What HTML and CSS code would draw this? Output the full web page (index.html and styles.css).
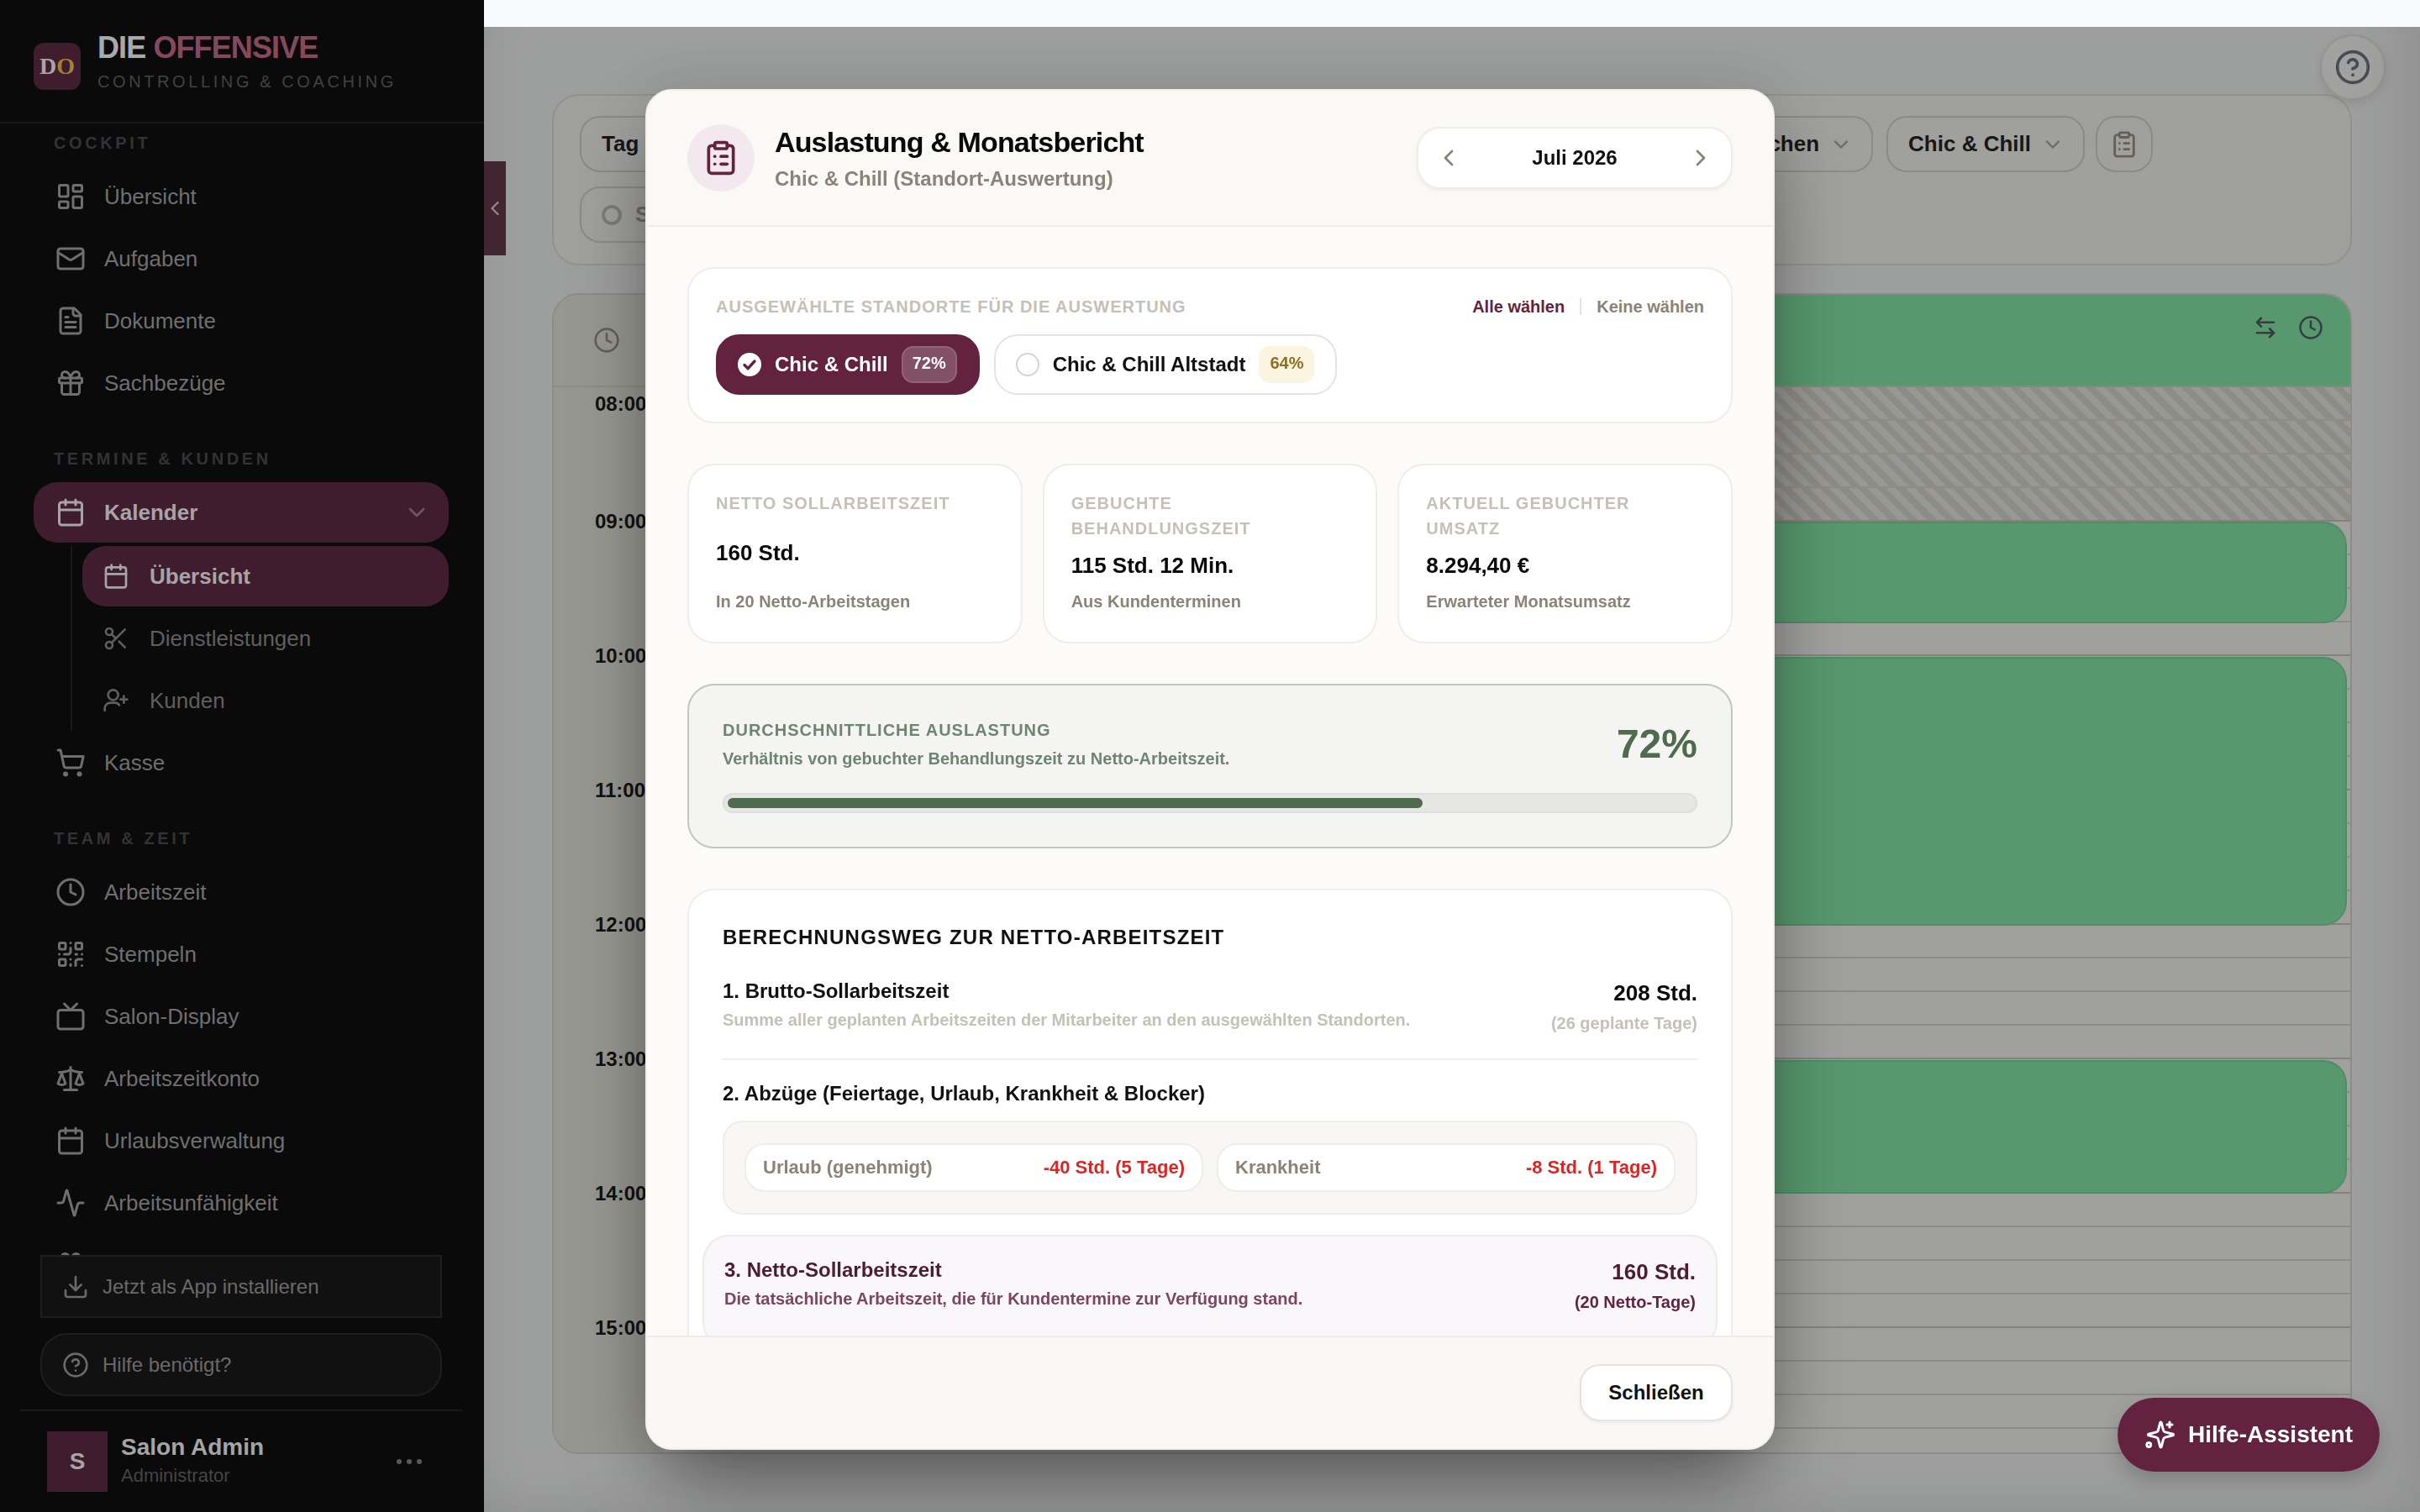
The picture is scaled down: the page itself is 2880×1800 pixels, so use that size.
FILE: index.html
```html
<!DOCTYPE html>
<html lang="de">
<head>
    <meta charset="UTF-8">
    <title>Auslastung &amp; Monatsbericht</title>
    <link rel="stylesheet" href="styles.css">
</head>
<body>
    <svg class="sprite" xmlns="http://www.w3.org/2000/svg">
        <symbol id="i-dash" viewBox="0 0 24 24"><rect x="3" y="3" width="7" height="9" rx="1"/><rect x="14" y="3" width="7" height="5" rx="1"/><rect x="14" y="12" width="7" height="9" rx="1"/><rect x="3" y="16" width="7" height="5" rx="1"/></symbol>
        <symbol id="i-mail" viewBox="0 0 24 24"><rect x="2" y="4" width="20" height="16" rx="2"/><path d="m22 7-8.97 5.7a1.94 1.94 0 0 1-2.06 0L2 7"/></symbol>
        <symbol id="i-file" viewBox="0 0 24 24"><path d="M15 2H6a2 2 0 0 0-2 2v16a2 2 0 0 0 2 2h12a2 2 0 0 0 2-2V7Z"/><path d="M14 2v4a2 2 0 0 0 2 2h4"/><path d="M10 9H8"/><path d="M16 13H8"/><path d="M16 17H8"/></symbol>
        <symbol id="i-gift" viewBox="0 0 24 24"><rect x="3" y="8" width="18" height="4" rx="1"/><path d="M12 8v13"/><path d="M19 12v7a2 2 0 0 1-2 2H7a2 2 0 0 1-2-2v-7"/><path d="M7.5 8a2.5 2.5 0 0 1 0-5A4.8 8 0 0 1 12 8a4.8 8 0 0 1 4.5-5 2.5 2.5 0 0 1 0 5"/></symbol>
        <symbol id="i-cal" viewBox="0 0 24 24"><path d="M8 2v4"/><path d="M16 2v4"/><rect x="3" y="4" width="18" height="18" rx="2"/><path d="M3 10h18"/></symbol>
        <symbol id="i-down" viewBox="0 0 24 24"><path d="m6 9 6 6 6-6"/></symbol>
        <symbol id="i-left" viewBox="0 0 24 24"><path d="m15 18-6-6 6-6"/></symbol>
        <symbol id="i-right" viewBox="0 0 24 24"><path d="m9 18 6-6-6-6"/></symbol>
        <symbol id="i-scissors" viewBox="0 0 24 24"><circle cx="6" cy="6" r="3"/><path d="M8.12 8.12 12 12"/><path d="M20 4 8.12 15.88"/><circle cx="6" cy="18" r="3"/><path d="M14.8 14.8 20 20"/></symbol>
        <symbol id="i-userplus" viewBox="0 0 24 24"><path d="M2 21v-2a5 5 0 0 1 5-5h4a5 5 0 0 1 4 2"/><circle cx="9.5" cy="7" r="4.5"/><path d="M19 8v6"/><path d="M22 11h-6"/></symbol>
        <symbol id="i-cart" viewBox="0 0 24 24"><circle cx="8" cy="21" r="1"/><circle cx="19" cy="21" r="1"/><path d="M2.05 2.05h2l2.66 12.42a2 2 0 0 0 2 1.58h9.78a2 2 0 0 0 1.95-1.57l1.65-7.43H5.12"/></symbol>
        <symbol id="i-clock" viewBox="0 0 24 24"><circle cx="12" cy="12" r="10"/><polyline points="12 6 12 12 16 14"/></symbol>
        <symbol id="i-qr" viewBox="0 0 24 24"><rect x="3" y="3" width="5" height="5" rx="1"/><rect x="16" y="3" width="5" height="5" rx="1"/><rect x="3" y="16" width="5" height="5" rx="1"/><path d="M21 16h-3a2 2 0 0 0-2 2v3"/><path d="M21 21v.01"/><path d="M12 7v3a2 2 0 0 1-2 2H7"/><path d="M3 12h.01"/><path d="M12 3h.01"/><path d="M12 16v.01"/><path d="M16 12h1"/><path d="M21 12v.01"/><path d="M12 21v-1"/></symbol>
        <symbol id="i-tv" viewBox="0 0 24 24"><rect x="2" y="7" width="20" height="15" rx="2"/><polyline points="17 2 12 7 7 2"/></symbol>
        <symbol id="i-scale" viewBox="0 0 24 24"><path d="m16 16 3-8 3 8c-.87.65-1.92 1-3 1s-2.13-.35-3-1Z"/><path d="m2 16 3-8 3 8c-.87.65-1.92 1-3 1s-2.13-.35-3-1Z"/><path d="M7 21h10"/><path d="M12 3v18"/><path d="M3 7h2c2 0 5-1 7-2 2 1 5 2 7 2h2"/></symbol>
        <symbol id="i-activity" viewBox="0 0 24 24"><path d="M22 12h-2.48a2 2 0 0 0-1.93 1.46l-2.35 8.36a.25.25 0 0 1-.48 0L9.24 2.18a.25.25 0 0 0-.48 0l-2.35 8.36A2 2 0 0 1 4.49 12H2"/></symbol>
        <symbol id="i-download" viewBox="0 0 24 24"><path d="M21 15v4a2 2 0 0 1-2 2H5a2 2 0 0 1-2-2v-4"/><polyline points="7 10 12 15 17 10"/><line x1="12" y1="15" x2="12" y2="3"/></symbol>
        <symbol id="i-help" viewBox="0 0 24 24"><circle cx="12" cy="12" r="10"/><path d="M9.09 9a3 3 0 0 1 5.83 1c0 2-3 3-3 3"/><path d="M12 17h.01"/></symbol>
        <symbol id="i-clipboard" viewBox="0 0 24 24"><rect x="8" y="2" width="8" height="4" rx="1"/><path d="M16 4h2a2 2 0 0 1 2 2v14a2 2 0 0 1-2 2H6a2 2 0 0 1-2-2V6a2 2 0 0 1 2-2h2"/><path d="M12 11h4"/><path d="M12 16h4"/><path d="M8 11h.01"/><path d="M8 16h.01"/></symbol>
        <symbol id="i-swap" viewBox="0 0 24 24"><path d="m8 3-4 4 4 4"/><path d="M4 7h16"/><path d="m16 21 4-4-4-4"/><path d="M20 17H4"/></symbol>
        <symbol id="i-spark" viewBox="0 0 24 24"><path d="M9.937 15.5A2 2 0 0 0 8.5 14.063l-6.135-1.582a.5.5 0 0 1 0-.962L8.5 9.936A2 2 0 0 0 9.937 8.5l1.582-6.135a.5.5 0 0 1 .963 0L14.063 8.5A2 2 0 0 0 15.5 9.937l6.135 1.581a.5.5 0 0 1 0 .964L15.5 14.063a2 2 0 0 0-1.437 1.437l-1.582 6.135a.5.5 0 0 1-.963 0z" transform="translate(1 0)"/><path d="M20 2v4"/><path d="M22 4h-4"/><circle cx="3.5" cy="20" r="1.6"/></symbol>
    </svg>

    <div class="app">
        <aside class="sidebar">
            <div class="brand">
                <div class="brand-logo"><span>D</span><span class="gold">O</span></div>
                <div class="brand-text">
                    <div class="brand-name">DIE <span class="plum">OFFENSIVE</span></div>
                    <div class="brand-sub">CONTROLLING &amp; COACHING</div>
                </div>
            </div>

            <nav class="nav">
                <div class="nav-title">COCKPIT</div>
                <a class="nav-item"><svg class="ico"><use href="#i-dash"/></svg>Übersicht</a>
                <a class="nav-item"><svg class="ico"><use href="#i-mail"/></svg>Aufgaben</a>
                <a class="nav-item"><svg class="ico"><use href="#i-file"/></svg>Dokumente</a>
                <a class="nav-item"><svg class="ico"><use href="#i-gift"/></svg>Sachbezüge</a>

                <div class="nav-title spaced">TERMINE &amp; KUNDEN</div>
                <a class="nav-item active"><svg class="ico"><use href="#i-cal"/></svg>Kalender<svg class="ico-chev"><use href="#i-down"/></svg></a>
                <div class="subnav">
                    <a class="sub-item active"><svg class="ico-sm"><use href="#i-cal"/></svg>Übersicht</a>
                    <a class="sub-item"><svg class="ico-sm"><use href="#i-scissors"/></svg>Dienstleistungen</a>
                    <a class="sub-item"><svg class="ico-sm"><use href="#i-userplus"/></svg>Kunden</a>
                </div>
                <a class="nav-item"><svg class="ico"><use href="#i-cart"/></svg>Kasse</a>

                <div class="nav-title spaced">TEAM &amp; ZEIT</div>
                <a class="nav-item"><svg class="ico"><use href="#i-clock"/></svg>Arbeitszeit</a>
                <a class="nav-item"><svg class="ico"><use href="#i-qr"/></svg>Stempeln</a>
                <a class="nav-item"><svg class="ico"><use href="#i-tv"/></svg>Salon-Display</a>
                <a class="nav-item"><svg class="ico"><use href="#i-scale"/></svg>Arbeitszeitkonto</a>
                <a class="nav-item"><svg class="ico"><use href="#i-cal"/></svg>Urlaubsverwaltung</a>
                <a class="nav-item"><svg class="ico"><use href="#i-activity"/></svg>Arbeitsunfähigkeit</a>
                <a class="nav-item"><svg class="ico"><use href="#i-gift"/></svg></a>
            </nav>

            <div class="side-actions">
                <button class="side-btn square"><svg class="ico-sm"><use href="#i-download"/></svg>Jetzt als App installieren</button>
                <button class="side-btn"><svg class="ico-sm"><use href="#i-help"/></svg>Hilfe benötigt?</button>
            </div>
            <div class="user">
                <div class="avatar">S</div>
                <div class="user-text">
                    <div class="user-name">Salon Admin</div>
                    <div class="user-role">Administrator</div>
                </div>
                <div class="dots"><i></i><i></i><i></i></div>
            </div>
        </aside>

        <main class="main">
            <button class="collapse-tab"><svg class="ico-tab"><use href="#i-left"/></svg></button>
            <button class="help-round"><svg class="ico-help"><use href="#i-help"/></svg></button>

            <section class="toolbar">
                <div class="toolbar-row">
                    <div class="chip chip-tag">Tag</div>
                    <div class="chip">Suchen<svg class="ico-chip"><use href="#i-down"/></svg></div>
                    <div class="chip">Chic &amp; Chill<svg class="ico-chip"><use href="#i-down"/></svg></div>
                    <div class="chip chip-icon"><svg class="ico-clip"><use href="#i-clipboard"/></svg></div>
                </div>
                <div class="toolbar-row">
                    <div class="chip chip-staff"><span class="ring"></span>Salon</div>
                </div>
            </section>

            <section class="calendar">
                <div class="cal-head">
                    <div class="cal-gutter-head"><svg class="ico-gut"><use href="#i-clock"/></svg></div>
                    <div class="cal-staff">
                        <svg class="ico-head"><use href="#i-swap"/></svg>
                        <svg class="ico-head"><use href="#i-clock"/></svg>
                    </div>
                </div>
                <div class="cal-body">
                    <div class="cal-gutter">
                        <div class="time">08:00</div>
                        <div class="time">09:00</div>
                        <div class="time">10:00</div>
                        <div class="time">11:00</div>
                        <div class="time">12:00</div>
                        <div class="time">13:00</div>
                        <div class="time">14:00</div>
                        <div class="time">15:00</div>
                    </div>
                    <div class="cal-grid">
                        <div class="hatch"></div>
                        <div class="hatch"></div>
                        <div class="hatch"></div>
                        <div class="hatch"></div>
                        <div class="appt appt-a"></div>
                        <div class="appt appt-b"></div>
                        <div class="appt appt-c"></div>
                    </div>
                </div>
            </section>
        </main>
    </div>

    <div class="backdrop">
        <div class="modal">
            <header class="modal-head">
                <div class="head-left">
                    <div class="head-icon"><svg class="ico-modal"><use href="#i-clipboard"/></svg></div>
                    <div>
                        <h2 class="modal-title">Auslastung &amp; Monatsbericht</h2>
                        <p class="modal-sub">Chic &amp; Chill (Standort-Auswertung)</p>
                    </div>
                </div>
                <div class="month-nav">
                    <svg class="ico-month"><use href="#i-left"/></svg>
                    <span>Juli 2026</span>
                    <svg class="ico-month"><use href="#i-right"/></svg>
                </div>
            </header>

            <div class="modal-body">
                <section class="card pick">
                    <div class="pick-head">
                        <span class="label">AUSGEWÄHLTE STANDORTE FÜR DIE AUSWERTUNG</span>
                        <span class="pick-links"><b class="link-on">Alle wählen</b><i class="link-sep"></i><b class="link-off">Keine wählen</b></span>
                    </div>
                    <div class="pick-chips">
                        <div class="site site-on">
                            <svg class="check" viewBox="0 0 28 28"><circle cx="14" cy="14" r="14" fill="#fff"/><path d="m8 14.5 4.2 4.2L20 10" fill="none" stroke="#632340" stroke-width="3.4"/></svg>
                            Chic &amp; Chill<span class="badge badge-on">72%</span>
                        </div>
                        <div class="site">
                            <span class="radio"></span>
                            Chic &amp; Chill Altstadt<span class="badge badge-warn">64%</span>
                        </div>
                    </div>
                </section>

                <section class="stats">
                    <div class="card stat">
                        <div class="label">NETTO SOLLARBEITSZEIT</div>
                        <div class="stat-value">160 Std.</div>
                        <div class="stat-note">In 20 Netto-Arbeitstagen</div>
                    </div>
                    <div class="card stat">
                        <div class="label">GEBUCHTE BEHANDLUNGSZEIT</div>
                        <div class="stat-value">115 Std. 12 Min.</div>
                        <div class="stat-note">Aus Kundenterminen</div>
                    </div>
                    <div class="card stat">
                        <div class="label">AKTUELL GEBUCHTER UMSATZ</div>
                        <div class="stat-value">8.294,40 €</div>
                        <div class="stat-note">Erwarteter Monatsumsatz</div>
                    </div>
                </section>

                <section class="usage">
                    <div class="usage-top">
                        <div>
                            <div class="usage-label">DURCHSCHNITTLICHE AUSLASTUNG</div>
                            <div class="usage-note">Verhältnis von gebuchter Behandlungszeit zu Netto-Arbeitszeit.</div>
                        </div>
                        <div class="usage-pct">72%</div>
                    </div>
                    <div class="bar"><div class="bar-fill" style="width: 72%"></div></div>
                </section>

                <section class="card calc">
                    <h3 class="calc-title">BERECHNUNGSWEG ZUR NETTO-ARBEITSZEIT</h3>
                    <div class="calc-row first">
                        <div>
                            <div class="calc-name">1. Brutto-Sollarbeitszeit</div>
                            <div class="calc-note">Summe aller geplanten Arbeitszeiten der Mitarbeiter an den ausgewählten Standorten.</div>
                        </div>
                        <div class="calc-right">
                            <div class="calc-value">208 Std.</div>
                            <div class="calc-note">(26 geplante Tage)</div>
                        </div>
                    </div>
                    <div class="calc-name second">2. Abzüge (Feiertage, Urlaub, Krankheit &amp; Blocker)</div>
                    <div class="deductions">
                        <div class="deduct"><span>Urlaub (genehmigt)</span><b>-40 Std. (5 Tage)</b></div>
                        <div class="deduct"><span>Krankheit</span><b>-8 Std. (1 Tage)</b></div>
                    </div>
                    <div class="calc-row net">
                        <div>
                            <div class="calc-name">3. Netto-Sollarbeitszeit</div>
                            <div class="calc-note">Die tatsächliche Arbeitszeit, die für Kundentermine zur Verfügung stand.</div>
                        </div>
                        <div class="calc-right">
                            <div class="calc-value">160 Std.</div>
                            <div class="calc-note">(20 Netto-Tage)</div>
                        </div>
                    </div>
                </section>
            </div>

            <footer class="modal-foot">
                <button class="close-btn">Schließen</button>
            </footer>
        </div>
    </div>

    <button class="assistant"><svg class="ico-spark"><use href="#i-spark"/></svg>Hilfe-Assistent</button>
</body>
</html>
```

FILE: styles.css
```css
* {
    box-sizing: border-box;
}
html, body {
    margin: 0;
    height: 100%;
    overflow: hidden;
}
body {
    font-family: "Liberation Sans", Arial, sans-serif;
    background: #f9fafc;
    color: #111;
}
button {
    font: inherit;
    cursor: pointer;
}
h2, h3, p {
    margin: 0;
}
.sprite {
    display: none;
}
svg {
    fill: none;
    stroke: currentColor;
    stroke-width: 2;
    stroke-linecap: round;
    stroke-linejoin: round;
    flex-shrink: 0;
}

.app {
    display: flex;
    height: 1800px;
}

/* sidebar, colours are already dimmed by the modal */
.sidebar {
    width: 576px;
    flex-shrink: 0;
    display: flex;
    flex-direction: column;
    background: #0a0a0a;
    color: #6f6f6f;
    z-index: 2;
}
.brand {
    height: 147px;
    flex-shrink: 0;
    display: flex;
    align-items: center;
    gap: 20px;
    padding: 12px 40px 0;
    border-bottom: 2px solid #1a1a1a;
}
.brand-logo {
    width: 56px;
    height: 56px;
    border-radius: 12px;
    background: #3f1d2e;
    display: flex;
    align-items: center;
    justify-content: center;
    font-family: "Liberation Serif", serif;
    font-weight: 700;
    font-size: 28px;
    color: #aaa6a6;
}
.gold {
    color: #a5822f;
}
.brand-text {
    margin-top: -12px;
}
.brand-name {
    font-size: 36px;
    line-height: 44px;
    font-weight: 700;
    letter-spacing: -0.9px;
    color: #a9a9a9;
}
.plum {
    color: #84495c;
}
.brand-sub {
    margin-top: 5px;
    font-size: 20px;
    line-height: 26px;
    letter-spacing: 3.6px;
    color: #424242;
    white-space: nowrap;
}
.nav {
    flex: 1;
    min-height: 0;
    overflow: hidden;
    padding: 11px 42px 0 40px;
}
.nav-title {
    height: 24px;
    line-height: 24px;
    padding-left: 24px;
    margin-bottom: 16px;
    font-size: 20px;
    font-weight: 700;
    letter-spacing: 3.6px;
    color: #333;
    white-space: nowrap;
}
.nav-title.spaced {
    margin-top: 42px;
}
.nav-item {
    height: 72px;
    margin-bottom: 2px;
    display: flex;
    align-items: center;
    gap: 22px;
    padding: 0 22px 0 26px;
    border-radius: 28px;
    font-size: 26px;
    white-space: nowrap;
}
.nav-item.active {
    background: #3f1d2e;
    color: #a8a4a6;
    font-weight: 700;
    margin-bottom: 0;
}
.ico {
    width: 36px;
    height: 36px;
}
.ico-chev {
    width: 32px;
    height: 32px;
    margin-left: auto;
    color: #6b5661;
}
.subnav {
    margin: 4px 0 2px 44px;
    padding-left: 12px;
    border-left: 2px solid #1a1a1a;
}
.sub-item {
    height: 72px;
    margin-bottom: 2px;
    display: flex;
    align-items: center;
    gap: 24px;
    padding: 0 24px;
    border-radius: 28px;
    font-size: 26px;
    color: #5f5f5f;
}
.sub-item:last-child {
    margin-bottom: 0;
}
.sub-item.active {
    background: #3f1d2e;
    color: #a8a4a6;
    font-weight: 700;
}
.ico-sm {
    width: 32px;
    height: 32px;
}
.side-actions {
    padding: 0 50px 0 48px;
    display: flex;
    flex-direction: column;
    gap: 18px;
}
.side-btn {
    height: 75px;
    display: flex;
    align-items: center;
    gap: 16px;
    padding: 0 24px;
    background: #111;
    border: 2px solid #1e1e1e;
    border-radius: 32px;
    font-size: 24px;
    color: #6a6a6a;
    white-space: nowrap;
}
.side-btn.square {
    border-radius: 0;
}
.user {
    margin: 16px 26px 0 24px;
    height: 122px;
    padding: 24px 32px;
    border-top: 2px solid #1a1a1a;
    display: flex;
    align-items: center;
    gap: 16px;
}
.avatar {
    width: 72px;
    height: 72px;
    background: #3f1d2e;
    color: #a8a4a6;
    font-size: 28px;
    font-weight: 700;
    display: flex;
    align-items: center;
    justify-content: center;
}
.user-text {
    margin-top: -3px;
}
.user-name {
    font-size: 28px;
    line-height: 34px;
    font-weight: 700;
    color: #a5a5a5;
}
.user-role {
    font-size: 22px;
    line-height: 28px;
    margin-top: 3px;
    color: #444;
}
.dots {
    margin-left: auto;
    display: flex;
    gap: 6px;
    padding-right: 16px;
}
.dots i {
    width: 6px;
    height: 6px;
    border-radius: 50%;
    background: #5a5a5a;
}

/* main page behind the modal */
.main {
    flex: 1;
    position: relative;
    padding: 112px 81px 69px;
    display: flex;
    flex-direction: column;
    gap: 33px;
}
.main::after {
    content: "";
    position: absolute;
    inset: 32px 0 0 0;
    box-shadow:
        inset -50px -30px 70px -30px rgba(0, 0, 0, 0.1),
        inset 40px 0 60px -40px rgba(0, 0, 0, 0.08);
    pointer-events: none;
}
.collapse-tab {
    position: absolute;
    left: 0;
    top: 192px;
    z-index: 1;
    width: 26px;
    height: 112px;
    padding: 0;
    border: 0;
    background: #632f48;
    color: #e0d8dc;
    display: flex;
    align-items: center;
    justify-content: center;
}
.ico-tab {
    width: 28px;
    height: 28px;
}
.help-round {
    position: absolute;
    right: 41px;
    top: 41px;
    width: 78px;
    height: 78px;
    padding: 0;
    border-radius: 50%;
    border: 2px solid #e8e6e3;
    background: #fff;
    color: #6b7280;
    display: flex;
    align-items: center;
    justify-content: center;
    box-shadow: 0 4px 12px rgba(0, 0, 0, 0.1);
}
.ico-help {
    width: 44px;
    height: 44px;
}
.toolbar {
    height: 204px;
    flex-shrink: 0;
    display: flex;
    flex-direction: column;
    gap: 17px;
    padding: 24px 235px 24px 31px;
    background: #fdfcfb;
    border: 2px solid #e8e3dd;
    border-radius: 32px;
}
.toolbar-row {
    display: flex;
    gap: 16px;
}
.chip {
    height: 67px;
    display: flex;
    align-items: center;
    gap: 12px;
    padding: 0 22px 0 24px;
    background: #fdfcfb;
    border: 2px solid #dcd7d0;
    border-radius: 24px;
    font-size: 26px;
    font-weight: 700;
    color: #1c1917;
    white-space: nowrap;
}
.chip-tag {
    width: 200px;
    margin-right: auto;
}
.chip-icon {
    width: 68px;
    margin-left: -3px;
    padding: 0;
    justify-content: center;
}
.chip-staff {
    width: 210px;
    gap: 16px;
    color: #a8a29e;
}
.ring {
    width: 24px;
    height: 24px;
    border-radius: 50%;
    border: 4px solid #c5c0b8;
}
.ico-chip {
    width: 28px;
    height: 28px;
    color: #a8a29e;
}
.ico-clip {
    width: 34px;
    height: 34px;
    color: #9a9187;
}
.calendar {
    flex: 1;
    min-height: 0;
    display: flex;
    flex-direction: column;
    overflow: hidden;
    background: #fdfcfb;
    border: 2px solid #dfdad4;
    border-radius: 32px;
}
.cal-head {
    height: 110px;
    flex-shrink: 0;
    display: flex;
}
.cal-gutter-head {
    width: 130px;
    padding-left: 47px;
    background: #efede6;
    border-bottom: 2px solid #dfdad3;
    display: flex;
    align-items: center;
    color: #9a9187;
}
.ico-gut {
    width: 32px;
    height: 32px;
}
.cal-staff {
    flex: 1;
    background: #86efac;
    border-bottom: 2px solid #d6d0ca;
    display: flex;
    align-items: flex-start;
    justify-content: flex-end;
    gap: 24px;
    padding: 24px 32px 0 0;
    color: #4b5563;
}
.ico-head {
    width: 30px;
    height: 30px;
}
.cal-body {
    flex: 1;
    min-height: 0;
    display: flex;
}
.cal-gutter {
    width: 130px;
    flex-shrink: 0;
    background: #efede6;
    padding: 1px 0 0 49px;
}
.time {
    height: 38px;
    line-height: 38px;
    margin-top: 122px;
    font-size: 24px;
    font-weight: 700;
    color: #111;
}
.time:first-child {
    margin-top: 0;
}
.time:nth-child(2) {
    margin-top: 102px;
}
.cal-grid {
    flex: 1;
    position: relative;
    background:
        repeating-linear-gradient(to bottom, transparent 0, transparent 158px, #cfcac4 158px, #cfcac4 160px),
        repeating-linear-gradient(to bottom, transparent 0, transparent 38px, #dfdad4 38px, #dfdad4 40px);
}
.hatch {
    height: 38px;
    margin-bottom: 2px;
    background: repeating-linear-gradient(45deg, #f0eeeb 0, #f0eeeb 8px, #e0dad5 8px, #e0dad5 16px);
}
.appt {
    position: absolute;
    left: 8px;
    right: 4px;
    background: #86efac;
    border: 2px solid #78dc9d;
    border-radius: 28px;
}
.appt-a {
    top: 160px;
    height: 121px;
}
.appt-b {
    top: 321px;
    height: 320px;
}
.appt-c {
    top: 801px;
    height: 159px;
}

/* modal */
.backdrop {
    position: fixed;
    inset: 32px 0 0 0;
    z-index: 5;
    display: flex;
    align-items: center;
    justify-content: center;
    background: linear-gradient(to right, transparent 576px, rgba(20, 22, 18, 0.4) 576px);
}
.modal {
    width: 1344px;
    height: 1620px;
    display: flex;
    flex-direction: column;
    overflow: hidden;
    background: #fcfbf9;
    border: 2px solid #f3f0ec;
    border-radius: 32px;
    box-shadow:
        0 50px 100px -24px rgba(0, 0, 0, 0.5),
        0 0 70px rgba(0, 0, 0, 0.1);
}
.modal-head {
    flex-shrink: 0;
    display: flex;
    align-items: center;
    justify-content: space-between;
    padding: 40px 48px;
    background: #faf9f6;
    border-bottom: 2px solid #f0ede8;
}
.head-left {
    display: flex;
    align-items: center;
    gap: 24px;
}
.head-icon {
    width: 80px;
    height: 80px;
    border-radius: 50%;
    background: #f4e8ef;
    color: #632340;
    display: flex;
    align-items: center;
    justify-content: center;
}
.ico-modal {
    width: 44px;
    height: 44px;
}
.modal-title {
    font-size: 34px;
    line-height: 41px;
    font-weight: 700;
    letter-spacing: -0.85px;
    color: #0a0a0a;
}
.modal-sub {
    margin-top: 8px;
    font-size: 24px;
    line-height: 30px;
    font-weight: 700;
    color: #8b8378;
}
.month-nav {
    width: 376px;
    height: 74px;
    display: flex;
    align-items: center;
    justify-content: space-between;
    padding: 0 20px;
    background: #fff;
    border: 2px solid #f0ede8;
    border-radius: 28px;
    box-shadow: 0 2px 4px rgba(0, 0, 0, 0.05);
    font-size: 24px;
    font-weight: 700;
    color: #111;
}
.ico-month {
    width: 32px;
    height: 32px;
    color: #8b8378;
}
.modal-body {
    flex: 1;
    min-height: 0;
    overflow: hidden;
    display: flex;
    flex-direction: column;
    gap: 48px;
    padding: 48px 48px 0;
}
.modal-body > section {
    flex-shrink: 0;
}
.card {
    background: #fff;
    border: 2px solid #f0ede8;
    border-radius: 32px;
}
.label {
    font-size: 20px;
    line-height: 30px;
    font-weight: 700;
    letter-spacing: 1px;
    color: #c5c0b8;
}
.pick {
    padding: 32px;
}
.pick-head {
    display: flex;
    align-items: center;
    justify-content: space-between;
    height: 26px;
    margin-bottom: 20px;
}
.pick-links {
    display: flex;
    align-items: center;
    gap: 18px;
    font-size: 20px;
}
.link-on {
    color: #632340;
}
.link-off {
    color: #8b8378;
}
.link-sep {
    width: 2px;
    height: 20px;
    background: #e8e3dd;
}
.pick-chips {
    display: flex;
    gap: 17px;
}
.site {
    height: 72px;
    display: flex;
    align-items: center;
    gap: 16px;
    padding: 0 25px 0 24px;
    background: #fff;
    border: 2px solid #e8e3dd;
    border-radius: 28px;
    font-size: 24px;
    font-weight: 700;
    color: #111;
}
.site-on {
    background: #632340;
    border-color: #632340;
    color: #fff;
}
.check {
    width: 28px;
    height: 28px;
    stroke: none;
}
.radio {
    width: 28px;
    height: 28px;
    border-radius: 50%;
    border: 2px solid #d8d3cc;
}
.badge {
    width: 66px;
    height: 44px;
    padding-bottom: 4px;
    border-radius: 14px;
    display: flex;
    align-items: center;
    justify-content: center;
    font-size: 20px;
}
.badge-on {
    background: #83506a;
    border: 2px solid #92647c;
    color: #fff;
}
.badge-warn {
    background: #faf4e1;
    color: #8f6f1f;
}
.stats {
    display: grid;
    grid-template-columns: repeat(3, 1fr);
    gap: 24px;
}
.stat {
    display: flex;
    flex-direction: column;
    justify-content: space-between;
    padding: 30px 32px 33px;
}
.stat-value {
    margin: 11px 0 10px;
    font-size: 26px;
    line-height: 36px;
    font-weight: 700;
    color: #0a0a0a;
}
.stat-note {
    font-size: 20px;
    line-height: 30px;
    font-weight: 700;
    color: #8b8378;
}
.usage {
    padding: 39px 40px 40px;
    background: #f4f4f2;
    border: 2px solid #bccabc;
    border-radius: 32px;
}
.usage-top {
    display: flex;
    align-items: center;
    justify-content: space-between;
}
.usage-label {
    font-size: 20px;
    line-height: 28px;
    font-weight: 700;
    letter-spacing: 1px;
    color: #6e8670;
}
.usage-note {
    margin-top: 6px;
    font-size: 20px;
    line-height: 28px;
    font-weight: 700;
    color: #6e8670;
}
.usage-pct {
    font-size: 48px;
    line-height: 60px;
    font-weight: 700;
    color: #4e6b4c;
}
.bar {
    height: 24px;
    margin-top: 27px;
    padding: 4px;
    background: #e6e6e4;
    border: 2px solid #dedfdc;
    border-radius: 12px;
}
.bar-fill {
    height: 100%;
    background: #4e6b4c;
    border-radius: 6px;
}
.calc {
    padding: 40px;
}
.calc-title {
    font-size: 24px;
    line-height: 32px;
    font-weight: 700;
    letter-spacing: 1.2px;
    color: #111;
}
.calc-row {
    display: flex;
    justify-content: space-between;
    align-items: flex-start;
}
.calc-row.first {
    margin-top: 32px;
    padding-bottom: 28px;
    border-bottom: 2px solid #f0ece8;
}
.calc-name {
    font-size: 24px;
    line-height: 32px;
    font-weight: 700;
    color: #111;
}
.calc-name.second {
    margin-top: 24px;
}
.calc-note {
    margin-top: 4px;
    font-size: 20px;
    line-height: 28px;
    font-weight: 700;
    color: #c5c0b8;
}
.calc-right {
    text-align: right;
}
.calc-value {
    font-size: 26px;
    line-height: 36px;
    font-weight: 700;
    color: #0a0a0a;
}
.deductions {
    margin-top: 16px;
    display: grid;
    grid-template-columns: 1fr 1fr;
    gap: 16px;
    padding: 25px 24px;
    background: #f8f7f5;
    border: 2px solid #f0ede8;
    border-radius: 24px;
}
.deduct {
    height: 58px;
    display: flex;
    align-items: center;
    justify-content: space-between;
    padding: 0 20px;
    background: #fff;
    border: 2px solid #f0ede8;
    border-radius: 24px;
    font-size: 22px;
    font-weight: 700;
    color: #8b8378;
}
.deduct b {
    color: #dc2626;
}
.calc-row.net {
    margin: 24px -24px 0;
    padding: 24px 24px 40px;
    background: #f9f7f9;
    border: 2px solid #efebe8;
    border-radius: 32px;
}
.net .calc-name,
.net .calc-value {
    color: #4f1b32;
}
.net .calc-note {
    color: #7c4561;
}
.net .calc-right .calc-note {
    color: #632340;
}
.modal-foot {
    flex-shrink: 0;
    display: flex;
    justify-content: flex-end;
    padding: 32px 48px;
    background: #f9f8f6;
    border-top: 2px solid #efece7;
}
.close-btn {
    width: 182px;
    height: 68px;
    padding: 0;
    background: #fff;
    border: 2px solid #e8e3dd;
    border-radius: 24px;
    box-shadow: 0 2px 4px rgba(0, 0, 0, 0.05);
    font-size: 24px;
    font-weight: 700;
    color: #111;
}
.assistant {
    position: fixed;
    right: 48px;
    bottom: 48px;
    z-index: 9;
    width: 312px;
    height: 88px;
    display: flex;
    align-items: center;
    gap: 16px;
    padding: 0 32px;
    background: #632340;
    border: 0;
    border-radius: 44px;
    box-shadow: 0 10px 25px rgba(0, 0, 0, 0.2);
    font-size: 28px;
    font-weight: 700;
    color: #fff;
    white-space: nowrap;
}
.ico-spark {
    width: 36px;
    height: 36px;
}
```
